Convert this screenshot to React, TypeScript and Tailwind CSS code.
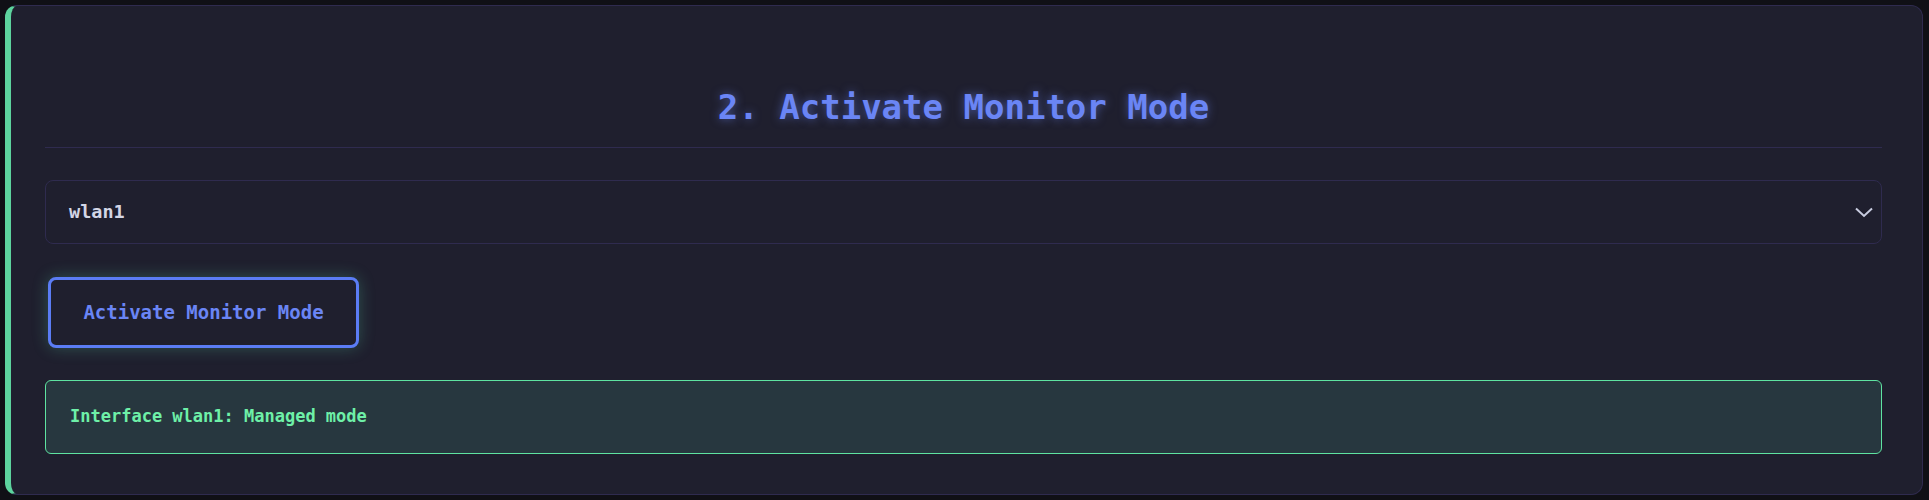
import React from "react";

export default function App() {
  return (
    <div className="min-h-[500px] bg-[#101016] pt-[5px] pl-[5px] pr-[6px]" style={{ fontFamily: '"DejaVu Sans Mono", "Liberation Mono", monospace' }}>
      <div className="h-[490px] rounded-xl border border-[#2f2b4f] border-l-[6px] border-l-[#5dd39e] bg-[#1f1f2e] pl-[34px] pr-10 pt-[81px]">
        <div className="border-b border-[#2f2b4f] pb-5">
          <h1 className="text-center text-[34px] leading-[40px] font-bold text-[#6a85f5] [text-shadow:0_0_10px_rgba(106,133,245,0.55)]">
            2. Activate Monitor Mode
          </h1>
        </div>
        <div className="mt-8 flex h-16 items-center justify-between rounded-lg border border-[#2f2b4f] bg-[#1f1f2e] pl-[23px] pr-2">
          <span className="text-[18.5px] font-bold text-[#d3d6e6]">wlan1</span>
          <svg width="18" height="11" viewBox="0 0 18 11" fill="none">
            <path d="M1 1.5L9 9L17 1.5" stroke="#c8cce0" strokeWidth="2" />
          </svg>
        </div>
        <button className="mt-[33px] ml-[3px] flex h-[71px] w-[311px] items-center justify-center rounded-lg border-[3px] border-[#5b7cf5] bg-[#1f1f2e] text-[19px] font-bold text-[#6a85f5] shadow-[0_0_16px_rgba(90,220,170,0.28)]">
          Activate Monitor Mode
        </button>
        <div className="mt-8 flex h-[74px] items-center rounded-md border border-[#5ee3a1] bg-[#27373f] pl-6">
          <span className="text-[17px] font-bold text-[#6ef0a8]">Interface wlan1: Managed mode</span>
        </div>
      </div>
    </div>
  );
}
